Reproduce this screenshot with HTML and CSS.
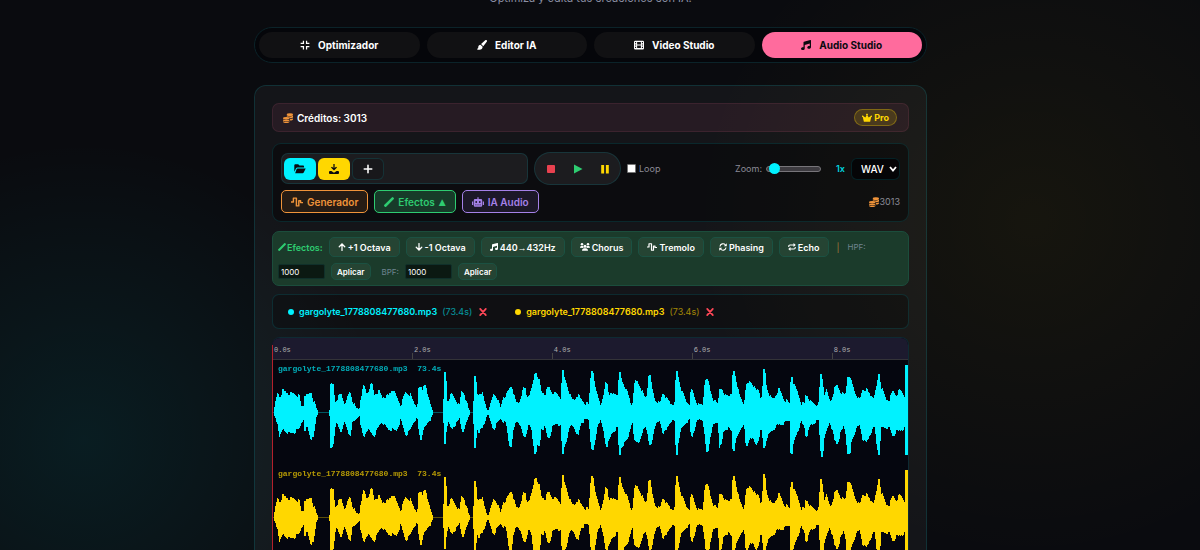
FILE: index.html
```html
<!DOCTYPE html>
<html lang="es">

<head>
    <meta charset="UTF-8">
    <meta name="viewport" content="width=device-width, initial-scale=1.0">
    <title>Audio Studio</title>
    <link rel="stylesheet" href="styles.css">
</head>

<body>
    <!-- Shared icons -->
    <svg class="sprite" aria-hidden="true">
        <symbol id="i-compress" viewBox="0 0 16 16"><path d="M5.500 1v4.500H1M10.500 1v4.500H15M1 10.500h4.500V15M15 10.500h-4.500V15" fill="none" stroke="currentColor" stroke-width="2"/></symbol>
        <symbol id="i-brush" viewBox="0 0 16 16"><path d="M15.500.5c.8.8.6 1.700.1 2.400L10 10 6.500 6.500 13.200.4c.7-.5 1.600-.6 2.300.1zM5.500 7.400 9 10.800C9 14 7 15.500 4 15.500H.5v-2c1.500.2 1.500-1.200 1.500-2.500C2 9 3.500 7.500 5.500 7.400z"/></symbol>
        <symbol id="i-film" viewBox="0 0 16 16"><path fill-rule="evenodd" d="M2 1h12a2 2 0 0 1 2 2v10a2 2 0 0 1-2 2H2a2 2 0 0 1-2-2V3a2 2 0 0 1 2-2zM1.600 3.300v1.800h1.800V3.300zm0 3.800v1.800h1.800V7.100zm0 3.800v1.800h1.800v-1.800zm11-7.600v1.800h1.800V3.300zm0 3.800v1.800h1.800V7.100zm0 3.800v1.800h1.800v-1.800zM5 3.300v3.800h6V3.300zm0 5.600v3.800h6V8.900z"/></symbol>
        <symbol id="i-music" viewBox="0 0 16 16"><path d="M16 1v10.500c0 1.400-1.300 2.500-3 2.500s-3-1-3-2.200 1.300-2.300 3-2.300l1 .1V5.600L6 8v5.500C6 15 4.700 16 3 16s-3-1-3-2.200 1.300-2.300 3-2.300l1 .1V3.600c0-.5.300-.8.700-1l10-2.600c.7-.2 1.300.3 1.300 1z"/></symbol>
        <symbol id="i-coins" viewBox="0 0 16 16"><ellipse cx="11" cy="2.600" rx="5" ry="2.300"/><path d="M6 4.400c2 1.500 8 1.500 10 0v1.800c0 2-4 2.500-5 2.300C10 6.500 8 5.800 6 5.600zM11.300 9.700c1.800-.1 3.700-.6 4.700-1.500v1.600c0 1.200-2 2-4.700 2.200z"/><ellipse cx="5.200" cy="8.500" rx="5.200" ry="2.200"/><path d="M0 10.200c2 1.400 8.400 1.400 10.400 0v1.300c0 2.300-10.400 2.300-10.400 0zM0 13c2 1.300 8.400 1.300 10.400 0v.8c0 2.700-10.400 2.700-10.400 0z"/></symbol>
        <symbol id="i-crown" viewBox="0 0 16 16"><path d="M3 14 1.200 6.500A1.300 1.300 0 1 1 2.400 5L5.300 7 7.400 3.600a1.400 1.400 0 1 1 1.200 0L10.700 7l2.900-2a1.300 1.300 0 1 1 1.200 1.500L13 14z"/></symbol>
        <symbol id="i-folder" viewBox="0 0 16 14"><path d="M0 11V2C0 1 .8.300 1.700.300H5.500L7.300 2H12c1 0 1.700.8 1.700 1.700V5H4.500c-1 0-1.800.5-2.200 1.300zM4.500 6.200H16L13.200 12c-.3.700-.9 1-1.600 1H1.200l2.200-6c.2-.5.600-.8 1.100-.8z"/></symbol>
        <symbol id="i-download" viewBox="0 0 16 16"><path d="M7 0h2v6.500L11.300 4.200l1.500 1.500L8 10.500 3.200 5.700l1.500-1.500L7 6.500z"/><path d="M2 11h1.800L8 14l4.200-3H14c1.100 0 2 .7 2 1.700v1.500c0 1-.9 1.800-2 1.800H2c-1.100 0-2-.8-2-1.800v-1.500c0-1 .9-1.700 2-1.700z"/></symbol>
        <symbol id="i-plus" viewBox="0 0 16 16"><path d="M8 2v12M2 8h12" fill="none" stroke="currentColor" stroke-width="2.500" stroke-linecap="round"/></symbol>
        <symbol id="i-wave" viewBox="0 0 20 16"><path d="M0 8h4V1.500h5v13h4V6h3v3h4" fill="none" stroke="currentColor" stroke-width="2.400" stroke-linejoin="round"/></symbol>
        <symbol id="i-wand" viewBox="0 0 16 16"><path d="M.6 12.500 12.500.6a1.500 1.500 0 0 1 2.200 0l.7.7a1.500 1.500 0 0 1 0 2.200L3.500 15.400a1.500 1.500 0 0 1-2.200 0l-.7-.7a1.500 1.500 0 0 1 0-2.200z"/></symbol>
        <symbol id="i-robot" viewBox="0 0 20 16"><path fill-rule="evenodd" d="M9 0h2v3h4a2 2 0 0 1 2 2v9a2 2 0 0 1-2 2H5a2 2 0 0 1-2-2V5a2 2 0 0 1 2-2h4zM7 6.500a1.500 1.500 0 1 0 0 3 1.500 1.500 0 0 0 0-3zm6 0a1.500 1.500 0 1 0 0 3 1.500 1.500 0 0 0 0-3zM5.500 12v1.500h2V12zm3.500 0v1.500h2V12zm3.500 0v1.500h2V12zM0 7h2v6H0zm18 0h2v6h-2z"/></symbol>
        <symbol id="i-up" viewBox="0 0 16 16"><path d="M8 15V2M2.500 7.500 8 2l5.500 5.500" fill="none" stroke="currentColor" stroke-width="2.500" stroke-linecap="round"/></symbol>
        <symbol id="i-down" viewBox="0 0 16 16"><path d="M8 1v13M2.500 8.500 8 14l5.500-5.500" fill="none" stroke="currentColor" stroke-width="2.500" stroke-linecap="round"/></symbol>
        <symbol id="i-users" viewBox="0 0 20 16"><circle cx="4" cy="2.500" r="2.500"/><circle cx="16" cy="2.500" r="2.500"/><circle cx="10" cy="6.500" r="3"/><path d="M0 9.500C0 7 1.200 6 3.500 6H5c.5 0 1 .1 1.300.3-.2 1.500.2 2.700 1 3.500zM20 9.500C20 7 18.800 6 16.500 6H15c-.5 0-1 .1-1.300.3.2 1.500-.2 2.700-1 3.500zM4 15.500c0-3 1.800-5 4.500-5h3c2.700 0 4.500 2 4.500 5z"/></symbol>
        <symbol id="i-sync" viewBox="0 0 16 16"><path d="M2 7a6 6 0 0 1 10.800-3L14 5.300M14 9a6 6 0 0 1-10.800 3L2 10.700" fill="none" stroke="currentColor" stroke-width="2.200"/><path d="M15.500.7v6h-6zM.5 15.300v-6h6z"/></symbol>
        <symbol id="i-repeat" viewBox="0 0 16 16"><path d="M1.500 8V6.500c0-1.500 1-2.500 2.500-2.500h8M14.500 8v1.500c0 1.500-1 2.500-2.500 2.500H4" fill="none" stroke="currentColor" stroke-width="2.200"/><path d="M11 0l4.500 4L11 8zM5 8 .5 12 5 16z"/></symbol>
        <symbol id="i-x" viewBox="0 0 16 16"><path d="M3.500 3l9 10M12.500 3l-9 10" fill="none" stroke="currentColor" stroke-width="2.800" stroke-linecap="round"/></symbol>
    </svg>

    <main class="page">
        <p class="subtitle">Optimiza y edita tus creaciones con IA.</p>

        <nav class="tabs">
            <button class="tab"><svg class="icon"><use href="#i-compress"/></svg>Optimizador</button>
            <button class="tab"><svg class="icon"><use href="#i-brush"/></svg>Editor IA</button>
            <button class="tab"><svg class="icon"><use href="#i-film"/></svg>Video Studio</button>
            <button class="tab active"><svg class="icon"><use href="#i-music"/></svg>Audio Studio</button>
        </nav>

        <section class="panel">
            <div class="credits-bar">
                <span class="credits"><svg class="icon coins"><use href="#i-coins"/></svg>Créditos: 3013</span>
                <span class="badge-pro"><svg class="icon"><use href="#i-crown"/></svg>Pro</span>
            </div>

            <!-- Toolbar -->
            <div class="toolbar">
                <div class="toolbar-row">
                    <div class="file-group">
                        <button class="btn-file open" aria-label="Abrir"><svg class="icon wide"><use href="#i-folder"/></svg></button>
                        <button class="btn-file save" aria-label="Descargar"><svg class="icon"><use href="#i-download"/></svg></button>
                        <button class="btn-file add" aria-label="Agregar pista"><svg class="icon"><use href="#i-plus"/></svg></button>
                    </div>
                    <div class="transport">
                        <button class="stop" aria-label="Detener"><svg viewBox="0 0 10 10"><rect x="1" y="1" width="8" height="8" rx="1"/></svg></button>
                        <button class="play" aria-label="Reproducir"><svg viewBox="0 0 10 10"><path d="M1 .5 9.500 5 1 9.500z"/></svg></button>
                        <button class="pause" aria-label="Pausar"><svg viewBox="0 0 10 10"><path d="M1.200 1h2.900v8.500H1.200zM5.900 1h2.900v8.500H5.900z"/></svg></button>
                    </div>
                    <label class="loop"><input type="checkbox">Loop</label>
                    <div class="zoom">
                        <label for="zoom">Zoom:</label>
                        <input type="range" id="zoom" min="1" max="20" value="2">
                        <span class="zoom-value">1x</span>
                        <select class="format" aria-label="Formato">
                            <option>WAV</option>
                            <option>MP3</option>
                        </select>
                    </div>
                </div>
                <div class="toolbar-row">
                    <button class="btn-mode generator"><svg class="icon wide"><use href="#i-wave"/></svg>Generador</button>
                    <button class="btn-mode effects"><svg class="icon"><use href="#i-wand"/></svg>Efectos <span class="caret">▲</span></button>
                    <button class="btn-mode ai"><svg class="icon wide"><use href="#i-robot"/></svg>IA Audio</button>
                    <span class="balance"><svg class="icon coins"><use href="#i-coins"/></svg>3013</span>
                </div>
            </div>

            <!-- Effects -->
            <div class="fx-panel">
                <span class="fx-title"><svg class="icon"><use href="#i-wand"/></svg>Efectos:</span>
                <button class="btn-fx"><svg class="icon"><use href="#i-up"/></svg>+1 Octava</button>
                <button class="btn-fx"><svg class="icon"><use href="#i-down"/></svg>-1 Octava</button>
                <button class="btn-fx"><svg class="icon"><use href="#i-music"/></svg><span>440<span class="arrow">→</span>432Hz</span></button>
                <button class="btn-fx"><svg class="icon wide"><use href="#i-users"/></svg>Chorus</button>
                <button class="btn-fx"><svg class="icon wide"><use href="#i-wave"/></svg>Tremolo</button>
                <button class="btn-fx"><svg class="icon"><use href="#i-sync"/></svg>Phasing</button>
                <button class="btn-fx"><svg class="icon"><use href="#i-repeat"/></svg>Echo</button>
                <span class="divider">|</span>
                <label class="fx-label" for="hpf">HPF:</label>
                <input class="fx-input" type="text" id="hpf" value="1000">
                <button class="btn-fx small">Aplicar</button>
                <label class="fx-label" for="bpf">BPF:</label>
                <input class="fx-input" type="text" id="bpf" value="1000">
                <button class="btn-fx small">Aplicar</button>
            </div>

            <!-- Track list -->
            <div class="track-list">
                <div class="track cyan">
                    <span class="dot"></span>
                    <span class="name">gargolyte_1778808477680.mp3</span>
                    <span class="duration">(73.4s)</span>
                    <button class="remove" aria-label="Quitar pista"><svg class="icon"><use href="#i-x"/></svg></button>
                </div>
                <div class="track yellow">
                    <span class="dot"></span>
                    <span class="name">gargolyte_1778808477680.mp3</span>
                    <span class="duration">(73.4s)</span>
                    <button class="remove" aria-label="Quitar pista"><svg class="icon"><use href="#i-x"/></svg></button>
                </div>
            </div>

            <!-- Timeline -->
            <div class="timeline">
                <div class="ruler">
                    <span>0.0s</span>
                    <span>2.0s</span>
                    <span>4.0s</span>
                    <span>6.0s</span>
                    <span>8.0s</span>
                </div>
                <div class="lane cyan">
                    <canvas class="wave" data-color="#00f2ff"></canvas>
                    <span class="lane-label">gargolyte_1778808477680.mp3&nbsp; 73.4s</span>
                </div>
                <div class="lane yellow">
                    <canvas class="wave" data-color="#ffd700"></canvas>
                    <span class="lane-label">gargolyte_1778808477680.mp3&nbsp; 73.4s</span>
                </div>
                <div class="playhead"></div>
            </div>
        </section>
    </main>

    <script src="script.js"></script>
</body>

</html>
```
FILE: styles.css
```css
* {
    box-sizing: border-box;
}

body {
    margin: 0;
    height: 100vh;
    padding-right: 19px;
    overflow: hidden;
    font-family: Inter, sans-serif;
    color: #fff;
    background:
        radial-gradient(circle at 7% 80%, rgba(0, 242, 255, 0.08), transparent 300px),
        radial-gradient(circle at 86% 40%, rgba(255, 215, 0, 0.05), transparent 340px),
        #0a0b0f;
}

button,
input,
select {
    font-family: inherit;
    color: inherit;
    margin: 0;
}

button {
    display: inline-flex;
    align-items: center;
    justify-content: center;
    border: none;
    padding: 0;
    white-space: nowrap;
    cursor: pointer;
}

.sprite {
    display: none;
}

.icon {
    width: 10px;
    height: 10px;
    fill: currentColor;
    flex-shrink: 0;
}

.icon.wide {
    width: 12px;
}

.page {
    max-width: 673px;
    margin: 0 auto;
}

.subtitle {
    margin: -8px 0 22px;
    font-size: 11px;
    line-height: 13px;
    text-align: center;
    color: #8b8fa3;
}

/* Tabs */
.tabs {
    display: flex;
    gap: 7px;
    padding: 4px;
    margin-bottom: 22px;
    background: #05060a;
    border: 1px solid #0b2329;
    border-radius: 18px;
}

.tab {
    flex: 1;
    height: 26px;
    gap: 8px;
    font-size: 10px;
    font-weight: 700;
    line-height: 12px;
    background: #111113;
    border-radius: 13px;
}

.tab.active {
    background: #ff6b9d;
    color: #0a0a0f;
}

/* Panel */
.panel {
    padding: 17px;
    background: rgba(255, 255, 255, 0.045);
    border: 1px solid rgba(0, 242, 255, 0.13);
    border-radius: 12px;
}

.credits-bar {
    display: flex;
    align-items: center;
    justify-content: space-between;
    height: 29px;
    padding: 0 11px 0 10px;
    margin-bottom: 11px;
    background: rgba(255, 107, 157, 0.08);
    border: 1px solid rgba(255, 107, 157, 0.1);
    border-radius: 7px;
}

.credits {
    display: flex;
    align-items: center;
    gap: 4px;
    font-size: 10px;
    font-weight: 600;
}

.coins {
    color: #f0943a;
}

.badge-pro {
    display: flex;
    align-items: center;
    gap: 2px;
    height: 17px;
    padding: 0 7px;
    font-size: 9px;
    font-weight: 700;
    color: #ffd700;
    background: rgba(255, 215, 0, 0.15);
    border: 1px solid rgba(255, 215, 0, 0.3);
    border-radius: 9px;
}

/* Toolbar */
.toolbar {
    padding: 8px;
    margin-bottom: 9px;
    background: rgba(0, 0, 0, 0.4);
    border: 1px solid rgba(0, 242, 255, 0.12);
    border-radius: 9px;
}

.toolbar-row {
    display: flex;
    align-items: center;
    gap: 6px;
}

.toolbar-row + .toolbar-row {
    margin-top: 5px;
}

.file-group {
    display: flex;
    flex: 1;
    align-items: center;
    gap: 2px;
    max-width: 247px;
    height: 31px;
    padding: 0 2px;
    background: #1c1c1f;
    border: 1px solid rgba(0, 242, 255, 0.12);
    border-radius: 7px;
}

.btn-file {
    width: 32px;
    height: 22px;
    border: 1px solid transparent;
    border-radius: 6px;
    color: #0a0a0f;
}

.btn-file.open {
    background: #00f2ff;
}

.btn-file.save {
    background: #ffd700;
}

.btn-file.add {
    background: #18181b;
    border-color: rgba(0, 242, 255, 0.12);
    color: #fff;
}

.transport {
    display: flex;
    align-items: center;
    height: 33px;
    padding: 0 2px;
    background: #1c1c1f;
    border: 1px solid rgba(0, 242, 255, 0.12);
    border-radius: 17px;
}

.transport button {
    width: 27px;
    height: 25px;
    background: none;
}

.transport svg {
    width: 10px;
    height: 10px;
    fill: currentColor;
}

.transport .stop {
    color: #e8414f;
}

.transport .play {
    color: #2ecc71;
}

.transport .pause {
    color: #ffd700;
}

.loop {
    display: flex;
    align-items: center;
    gap: 3px;
    font-size: 9px;
    color: #8b8b96;
}

.loop input {
    appearance: none;
    width: 9px;
    height: 9px;
    background: #fff;
    border: 1px solid #767676;
    border-radius: 1px;
}

.zoom {
    display: flex;
    align-items: center;
    gap: 4px;
    margin-left: auto;
    font-size: 9px;
    color: #8b8b96;
}

.zoom input {
    appearance: none;
    width: 55px;
    height: 6px;
    background: #3d3b40;
    border: 1px solid #77757a;
    border-radius: 3px;
}

.zoom input::-webkit-slider-thumb {
    appearance: none;
    width: 11px;
    height: 11px;
    background: #00f2ff;
    border-radius: 50%;
}

.zoom-value {
    width: 20px;
    text-align: right;
    color: #00d5e0;
    font-weight: 600;
}

.format {
    appearance: none;
    width: 49px;
    height: 22px;
    margin-left: 2px;
    padding: 0 0 0 9px;
    font-size: 10px;
    font-weight: 500;
    color: #fff;
    background: #050507 url("data:image/svg+xml,%3Csvg xmlns='http://www.w3.org/2000/svg' viewBox='0 0 8 6'%3E%3Cpath d='M1 1l3 3.500L7 1' fill='none' stroke='white' stroke-width='1.800'/%3E%3C/svg%3E") right 2px center / 8px 6px no-repeat;
    border: 1px solid rgba(0, 242, 255, 0.12);
    border-radius: 6px;
}

.btn-mode {
    height: 23px;
    padding: 0 9px;
    gap: 4px;
    font-size: 10px;
    font-weight: 600;
    border: 1px solid currentColor;
    border-radius: 5px;
}

.btn-mode.generator {
    color: #f0943a;
    background: #261c14;
}

.btn-mode.effects {
    color: #2ecc71;
    background: #173b29;
}

.btn-mode.ai {
    color: #a581e8;
    background: #1c1828;
}

.caret {
    font-family: "DejaVu Sans", sans-serif;
    font-size: 9px;
}

.balance {
    display: flex;
    align-items: center;
    gap: 1px;
    margin-left: auto;
    font-size: 9px;
    color: #8b8b96;
}

/* Effects */
.fx-panel {
    display: flex;
    flex-wrap: wrap;
    align-items: center;
    gap: 6px;
    padding: 5px;
    margin-bottom: 8px;
    background: #1b3b2b;
    border: 1px solid #1b4d3c;
    border-radius: 7px;
}

.fx-title {
    display: flex;
    align-items: center;
    gap: 1px;
    font-size: 9px;
    font-weight: 600;
    color: #2ecc71;
}

.btn-fx {
    height: 20px;
    padding: 0 8px;
    gap: 2px;
    font-size: 9px;
    font-weight: 600;
    background: #254433;
    border: 1px solid #1b5142;
    border-radius: 5px;
}

.fx-panel .icon {
    width: 8px;
    height: 8px;
}

.fx-panel .icon.wide {
    width: 10px;
}

.arrow {
    font-family: "Liberation Sans", sans-serif;
    font-weight: 400;
}

.btn-fx.small {
    height: 17px;
    padding: 0 5px;
    font-size: 8px;
}

.divider {
    margin: 0 2px;
    font-size: 9px;
    line-height: 11px;
    color: #a07a3a;
}

.fx-label {
    font-size: 8px;
    color: #6f8590;
}

.btn-fx + .fx-label {
    margin-left: 5px;
}

.fx-input {
    width: 47px;
    height: 15px;
    padding: 0 2px;
    font-size: 8px;
    background: #0b1912;
    border: 1px solid #10302a;
    border-radius: 2px;
}

/* Track list */
.track-list {
    display: flex;
    gap: 26px;
    height: 35px;
    padding: 0 15px;
    margin-bottom: 8px;
    background: rgba(0, 0, 0, 0.25);
    border: 1px solid rgba(0, 242, 255, 0.12);
    border-radius: 7px;
}

.track {
    display: flex;
    align-items: center;
    gap: 5px;
    font-size: 9px;
}

.cyan {
    color: #00f2ff;
}

.yellow {
    color: #ffd700;
}

.dot {
    width: 6px;
    height: 6px;
    background: currentColor;
    border-radius: 50%;
}

.name {
    font-weight: 600;
}

.duration {
    opacity: 0.6;
}

.remove {
    width: 12px;
    background: none;
    color: #ff4757;
}

/* Timeline */
.timeline {
    position: relative;
    background: #05060f;
    border: 1px solid #0e2a33;
    border-left: none;
    border-radius: 8px 8px 0 0;
    overflow: hidden;
}

.ruler {
    display: grid;
    grid-template-columns: repeat(5, 22%);
    height: 22px;
    background: #1c1a2e;
    border-bottom: 1px solid #333338;
    font: 7px/24px "Liberation Mono", monospace;
    color: #b0b0b0;
}

.ruler span {
    height: 21px;
    padding-left: 2px;
    background: linear-gradient(#444, #444) left bottom / 1px 6px no-repeat;
}

.lane {
    position: relative;
    height: 105px;
}

.wave {
    display: block;
    width: 100%;
    height: 105px;
}

.lane-label {
    position: absolute;
    top: 4px;
    left: 6px;
    font: bold 8px/10px "Liberation Mono", monospace;
    opacity: 0.7;
}

.playhead {
    position: absolute;
    top: 7px;
    bottom: 0;
    left: 0;
    width: 1px;
    background: #b3202c;
}
```
FILE: script.js
```js
// Peaks: [position, level above, level below]
const peaks = [
    [2, 0, 0], [6, 18, 10], [8, 13, 22], [11, 21, 15], [17, 18, 20], [22, 18, 19], [27, 15, 15], [29, 6, 10],
    [32, 5, 6], [33, 17, 19], [35, 15, 10], [39, 19, 24], [41, 11, 25], [44, 4, 4], [46, 0, 0], [58, 0, 0],
    [59, 26, 35], [61, 28, 31], [63, 8, 12], [65, 12, 10], [69, 17, 18], [72, 9, 7], [75, 10, 14], [78, 20, 22],
    [80, 11, 10], [84, 4, 6], [88, 3, 2], [89, 12, 12], [92, 25, 23], [95, 16, 15], [100, 28, 20], [102, 16, 22],
    [107, 20, 12], [110, 14, 8], [117, 16, 16], [121, 22, 16], [124, 15, 18], [129, 5, 5], [134, 19, 21], [138, 17, 17],
    [142, 8, 7], [146, 5, 5], [147, 22, 15], [149, 24, 27], [151, 20, 15], [153, 30, 15], [155, 17, 10], [159, 6, 5],
    [161, 0, 0], [172, 0, 0], [173, 41, 36], [174, 38, 18], [175, 12, 13], [176, 10, 7], [180, 17, 15], [185, 10, 9],
    [188, 4, 4], [190, 20, 14], [192, 19, 18], [194, 10, 10], [198, 0, 0], [202, 0, 0], [203, 37, 37], [204, 35, 30],
    [205, 16, 12], [207, 17, 18], [210, 19, 16], [213, 8, 8], [215, 2, 2], [217, 1, 1], [220, 9, 10], [222, 17, 16],
    [225, 14, 10], [228, 5, 6], [230, 5, 5], [232, 15, 8], [235, 16, 10], [238, 22, 32], [240, 27, 32], [241, 20, 20],
    [244, 9, 8], [248, 9, 8], [250, 16, 16], [253, 25, 25], [255, 14, 16], [257, 16, 12], [260, 20, 14], [262, 30, 30],
    [264, 41, 45], [265, 36, 30], [268, 30, 34], [269, 20, 15], [274, 17, 14], [277, 25, 26], [280, 19, 15], [284, 18, 10],
    [289, 14, 11], [290, 15, 15], [291, 47, 45], [292, 37, 36], [295, 27, 25], [298, 17, 14], [300, 12, 11], [304, 12, 14],
    [306, 17, 25], [309, 12, 9], [313, 8, 7], [318, 7, 5], [319, 30, 25], [321, 44, 39], [323, 24, 30], [326, 16, 10],
    [329, 7, 6], [332, 12, 15], [335, 32, 33], [337, 18, 28], [340, 17, 20], [344, 18, 15], [347, 18, 15], [348, 44, 46],
    [350, 31, 32], [353, 25, 30], [356, 18, 25], [359, 8, 12], [361, 4, 4], [363, 25, 27], [365, 31, 28], [369, 24, 27],
    [372, 16, 14], [375, 12, 13], [377, 27, 20], [378, 42, 33], [380, 25, 30], [383, 12, 12], [389, 7, 7], [392, 20, 20],
    [394, 14, 18], [399, 8, 7], [404, 8, 8], [405, 42, 46], [406, 40, 40], [407, 32, 25], [410, 21, 15], [415, 9, 8],
    [419, 8, 7], [420, 23, 25], [424, 11, 11], [427, 6, 6], [432, 7, 6], [434, 32, 25], [436, 33, 42], [439, 20, 20],
    [442, 11, 11], [447, 7, 8], [449, 26, 37], [452, 16, 17], [457, 17, 14], [461, 15, 18], [462, 45, 43], [464, 35, 28],
    [468, 15, 18], [473, 6, 7], [475, 25, 35], [479, 30, 22], [482, 26, 26], [485, 20, 31], [487, 22, 25], [490, 10, 13],
    [492, 26, 26], [493, 48, 38], [495, 24, 24], [500, 12, 18], [504, 14, 13], [508, 22, 11], [512, 13, 10], [519, 7, 6],
    [520, 35, 45], [521, 35, 40], [522, 28, 30], [525, 22, 20], [530, 8, 8], [534, 8, 14], [535, 18, 24], [539, 10, 12],
    [544, 7, 8], [548, 8, 7], [549, 25, 25], [550, 40, 40], [551, 32, 45], [553, 16, 25], [555, 21, 18], [558, 12, 9],
    [560, 9, 10], [564, 23, 27], [566, 26, 30], [569, 20, 20], [573, 16, 11], [575, 18, 20], [577, 36, 42], [579, 34, 40],
    [580, 30, 28], [584, 18, 17], [589, 10, 10], [592, 22, 25], [595, 22, 29], [599, 16, 20], [604, 15, 12], [606, 25, 30],
    [608, 38, 42], [610, 24, 14], [615, 12, 14], [619, 12, 15], [622, 20, 22], [625, 16, 18], [629, 21, 17], [634, 15, 14],
    [635, 47, 42], [636, 47, 42]
];
const span = 637;

function levelAt(pos, channel) {
    let i = 1;
    while (i < peaks.length - 1 && peaks[i][0] < pos) i++;
    const a = peaks[i - 1];
    const b = peaks[i];
    const t = Math.min(1, Math.max(0, (pos - a[0]) / (b[0] - a[0])));
    return a[channel] + (b[channel] - a[channel]) * t;
}

// Highest level in the small window that one column stands for
function columnLevel(pos, channel) {
    return Math.max(levelAt(pos, channel), levelAt(pos + 1, channel));
}

function drawWave(canvas) {
    const width = canvas.clientWidth;
    const height = canvas.clientHeight;
    canvas.width = width;
    canvas.height = height;
    const ctx = canvas.getContext('2d');
    const middle = Math.floor(height / 2);
    ctx.fillStyle = canvas.dataset.color;

    // Centre line
    ctx.globalAlpha = 0.35;
    ctx.fillRect(0, middle, width, 1);
    ctx.globalAlpha = 1;

    for (let x = 0; x < width; x++) {
        const pos = x * span / width;
        let up = columnLevel(pos, 1);
        let down = columnLevel(pos, 2);
        if (up < 1 && down < 1) continue;
        // Slightly ragged edges between the peaks
        if (up < 32 && up > 6) {
            const step = Math.floor(x / 2);
            up += (step * 7) % 4 - 1;
            down += (step * 5) % 4 - 1;
        }
        up = Math.round(up);
        ctx.fillRect(x, middle - up, 1, up + Math.round(down) + 1);
    }
}

function drawAll() {
    document.querySelectorAll('.wave').forEach(drawWave);
}

window.addEventListener('resize', drawAll);
drawAll();
```
